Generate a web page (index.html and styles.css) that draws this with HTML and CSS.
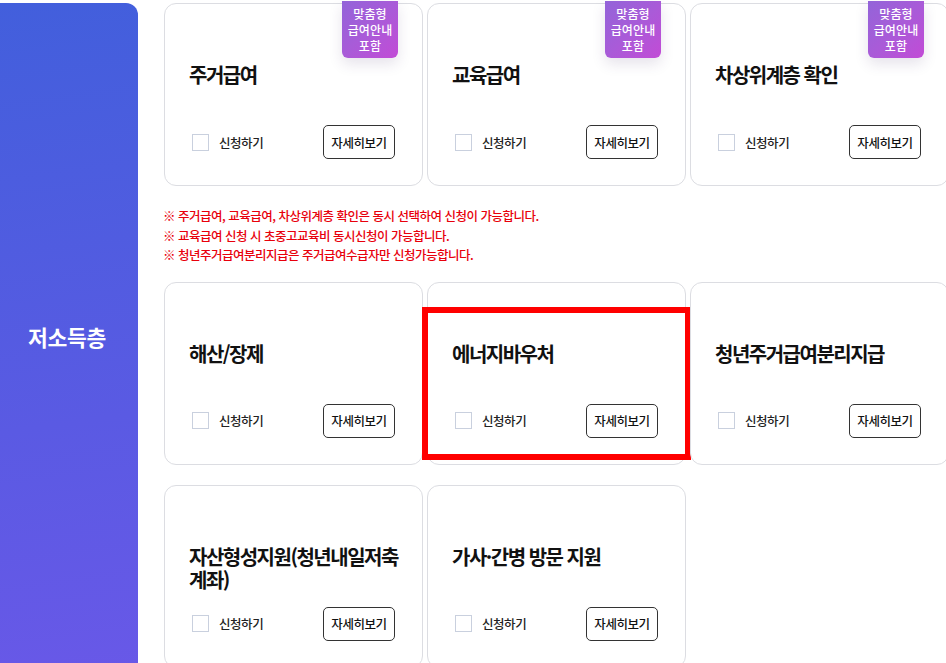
FILE: index.html
```html
<!DOCTYPE html>
<html lang="ko">
<head>
<meta charset="utf-8">
<link rel="stylesheet" href="styles.css">
</head>
<body>
<div class="page">
  <aside class="side"><span class="side-title">저소득층</span></aside>
  <main class="content">
    <div class="grid">
      <div class="card">
        <span class="badge">맞춤형<br>급여안내<br>포함</span>
        <h3 class="title">주거급여</h3>
        <div class="actions">
          <label class="check"><span class="box"></span>신청하기</label>
          <button class="more">자세히보기</button>
        </div>
      </div>
      <div class="card">
        <span class="badge">맞춤형<br>급여안내<br>포함</span>
        <h3 class="title">교육급여</h3>
        <div class="actions">
          <label class="check"><span class="box"></span>신청하기</label>
          <button class="more">자세히보기</button>
        </div>
      </div>
      <div class="card">
        <span class="badge">맞춤형<br>급여안내<br>포함</span>
        <h3 class="title">차상위계층 확인</h3>
        <div class="actions">
          <label class="check"><span class="box"></span>신청하기</label>
          <button class="more">자세히보기</button>
        </div>
      </div>
    </div>
    <ul class="notes">
      <li>※ 주거급여, 교육급여, 차상위계층 확인은 동시 선택하여 신청이 가능합니다.</li>
      <li>※ 교육급여 신청 시 초중고교육비 동시신청이 가능합니다.</li>
      <li>※ 청년주거급여분리지급은 주거급여수급자만 신청가능합니다.</li>
    </ul>
    <div class="grid">
      <div class="card">
        <h3 class="title">해산/장제</h3>
        <div class="actions">
          <label class="check"><span class="box"></span>신청하기</label>
          <button class="more">자세히보기</button>
        </div>
      </div>
      <div class="card">
        <span class="highlight"></span>
        <h3 class="title">에너지바우처</h3>
        <div class="actions">
          <label class="check"><span class="box"></span>신청하기</label>
          <button class="more">자세히보기</button>
        </div>
      </div>
      <div class="card">
        <h3 class="title">청년주거급여분리지급</h3>
        <div class="actions">
          <label class="check"><span class="box"></span>신청하기</label>
          <button class="more">자세히보기</button>
        </div>
      </div>
      <div class="card">
        <h3 class="title">자산형성지원(청년내일저축 계좌)</h3>
        <div class="actions">
          <label class="check"><span class="box"></span>신청하기</label>
          <button class="more">자세히보기</button>
        </div>
      </div>
      <div class="card">
        <h3 class="title">가사·간병 방문 지원</h3>
        <div class="actions">
          <label class="check"><span class="box"></span>신청하기</label>
          <button class="more">자세히보기</button>
        </div>
      </div>
    </div>
  </main>
</div>
</body>
</html>
```

FILE: styles.css
```css
* { box-sizing: border-box; }
html, body { margin: 0; padding: 0; background: #fff; }
body {
  font-family: "Noto Sans CJK KR", "Noto Sans", sans-serif;
  color: #111;
  overflow: hidden;
  width: 946px;
  height: 663px;
}
.page {
  display: flex;
  align-items: stretch;
  padding-top: 3px;
  gap: 26px;
  width: 990px;
  height: 700px;
}
.side {
  flex: 0 0 138px;
  border-radius: 0 12px 12px 0;
  background: linear-gradient(172deg, #425fdc 0%, #5a5ae3 60%, #6a58e8 100%);
  display: flex;
  align-items: center;
  justify-content: center;
  padding-bottom: 30px;
}
.side-title {
  color: #fff;
  font-size: 21.5px;
  font-weight: 700;
  letter-spacing: -0.3px;
  margin-left: -4px;
}
.content {
  flex: 1;
  display: flex;
  flex-direction: column;
}
.grid {
  display: grid;
  grid-template-columns: repeat(3, 259px);
  column-gap: 4px;
  row-gap: 20px;
}
.card {
  position: relative;
  height: 183px;
  border: 1px solid #dcdde2;
  border-radius: 12px;
  background: #fff;
  padding: 0 27px 26px 24px;
  display: flex;
  flex-direction: column;
}
.badge {
  position: absolute;
  top: -3px;
  right: 24px;
  width: 56px;
  padding: 5px 0 4px;
  border-radius: 0 0 6px 6px;
  background: linear-gradient(135deg, #9364d9 0%, #a95bd8 50%, #c24bd6 100%);
  box-shadow: 0 6px 14px rgba(60, 40, 100, 0.13);
  color: #fff;
  font-size: 12px;
  line-height: 16px;
  letter-spacing: 0.1px;
  text-align: center;
  font-weight: 500;
}
.title {
  margin: 59px -8px 0 0;
  font-size: 20px;
  line-height: 23px;
  font-weight: 700;
  letter-spacing: -1.5px;
  color: #111;
  word-break: keep-all;
}
.actions {
  margin-top: auto;
  display: flex;
  align-items: center;
  justify-content: space-between;
}
.check {
  display: flex;
  align-items: center;
  gap: 10px;
  margin-left: 3px;
  font-size: 12.5px;
  font-weight: 500;
  letter-spacing: -0.45px;
  color: #222;
}
.box {
  width: 17px;
  height: 17px;
  border: 1px solid #c9d0de;
  background: #fff;
}
.more {
  width: 72px;
  height: 34px;
  border: 1px solid #333;
  border-radius: 5px;
  background: #fff;
  font-family: inherit;
  font-size: 12.5px;
  font-weight: 500;
  letter-spacing: -0.45px;
  color: #111;
  padding: 0;
}
.notes {
  list-style: none;
  margin: 20px 0 17px -1px;
  padding: 0;
  color: #e8000b;
  font-size: 12.5px;
  line-height: 19.5px;
  letter-spacing: -0.5px;
  font-weight: 500;
}
.highlight {
  position: absolute;
  left: -6px;
  top: 24px;
  width: 269px;
  height: 153px;
  border: 6px solid #ff0000;
  pointer-events: none;
}
```
